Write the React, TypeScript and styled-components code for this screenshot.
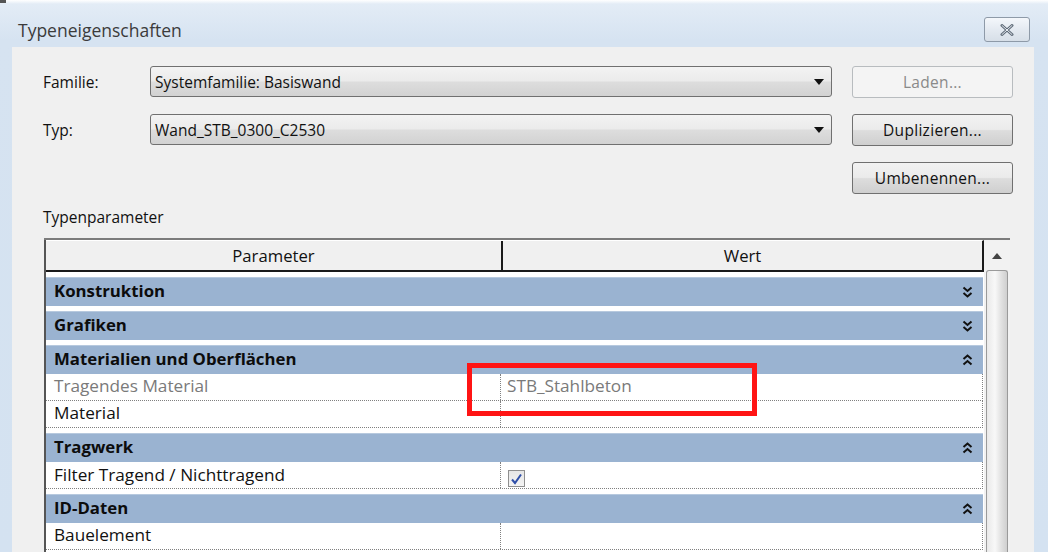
import React from "react";
import styled, { createGlobalStyle } from "styled-components";

const Global = createGlobalStyle`
  html, body { margin: 0; padding: 0; background: #ffffff; }
  body { font-family: "Open Sans", "Noto Sans", sans-serif; }
  * { box-sizing: border-box; }
`;

const Window = styled.div`
  width: 1048px;
  height: 552px;
  overflow: hidden;
  position: relative;
  background: linear-gradient(180deg, #ffffff 0px, #e3ecf6 4px, #d6e3f1 40px, #d4e2f1 100%);
  display: flex;
  flex-direction: column;
  &::before {
    content: "";
    position: absolute;
    left: 0;
    top: 0;
    width: 6px;
    height: 3px;
    background: #555;
  }
`;

const TitleBar = styled.div`
  height: 47px;
  flex: none;
  display: flex;
  align-items: flex-start;
  justify-content: space-between;
  padding: 0 18px 0 18px;
`;

const Title = styled.div`
  font-size: 17.5px;
  line-height: 22px;
  margin-top: 19px;
  color: #3b3b3b;
`;

const CloseButton = styled.div`
  width: 46px;
  height: 25px;
  margin-top: 17px;
  border: 1px solid #8e9aa8;
  border-radius: 3px;
  background: linear-gradient(180deg, #f4f7fb 0%, #e4eaf1 50%, #d7dfe8 100%);
  display: flex;
  align-items: center;
  justify-content: center;
`;

const Body = styled.div`
  flex: 1;
  display: flex;
  margin-left: 12px;
  margin-right: 14px;
  min-height: 0;
`;

const Client = styled.div`
  flex: 1;
  background: #f0f0f0;
  padding: 19px 0 0 31px;
  display: flex;
  flex-direction: column;
  min-height: 0;
`;

const FormGrid = styled.div`
  display: grid;
  grid-template-columns: 87px 682px 161px;
  grid-auto-rows: 32px;
  column-gap: 20px;
  row-gap: 16px;
`;

const Label = styled.div`
  font-size: 15.5px;
  color: #111;
  display: flex;
  align-items: center;
`;

const Select = styled.div`
  border: 1px solid #707070;
  border-radius: 3px;
  background: linear-gradient(180deg, #f3f3f3 0%, #ebebeb 48%, #dddddd 52%, #d2d2d2 100%);
  display: flex;
  align-items: center;
  justify-content: space-between;
  padding: 0 4px 0 4px;
  font-size: 15.5px;
  color: #111;
  height: 31px;
`;

const Arrow = styled.span`
  width: 0;
  height: 0;
  border-left: 5px solid transparent;
  border-right: 5px solid transparent;
  border-top: 6px solid #111;
  margin-right: 3px;
`;

const Button = styled.div<{ $disabled?: boolean }>`
  border: 1px solid ${(p) => (p.$disabled ? "#b8bcbf" : "#707070")};
  border-radius: 3px;
  background: ${(p) =>
    p.$disabled
      ? "#f4f4f4"
      : "linear-gradient(180deg, #f2f2f2 0%, #ebebeb 48%, #dddddd 52%, #cfcfcf 100%)"};
  color: ${(p) => (p.$disabled ? "#8a8a8a" : "#111")};
  font-size: 15.5px;
  letter-spacing: 0.3px;
  display: flex;
  align-items: center;
  justify-content: center;
`;

const SectionLabel = styled.div`
  font-size: 15.5px;
  color: #111;
  margin-top: 13px;
  height: 20px;
  line-height: 20px;
`;

const TableFrame = styled.div`
  margin-top: 11px;
  margin-left: 1px;
  width: 966px;
  flex: 1;
  display: flex;
  min-height: 0;
  border-top: 2px solid #7c7c7c;
`;

const TableMain = styled.div`
  width: 940px;
  display: flex;
  flex-direction: column;
  border-left: 2px solid #555;
  position: relative;
  background: #ffffff;
`;

const HeaderRow = styled.div`
  height: 32px;
  flex: none;
  display: grid;
  grid-template-columns: 457px 1fr;
  border-bottom: 2px solid #1a1a1a;
  border-right: 2px solid #1a1a1a;
  border-top: 1px solid #ffffff;
  background: #f0f0f0;
`;

const HeaderCell = styled.div<{ $divider?: boolean }>`
  display: flex;
  align-items: center;
  justify-content: center;
  font-size: 16.7px;
  color: #111;
  padding-bottom: 1px;
  border-right: ${(p) => (p.$divider ? "2px solid #1a1a1a" : "none")};
`;

const GroupRow = styled.div`
  flex: none;
  height: 34px;
  padding-top: 5px;
  background: #ffffff;
  margin-right: 1px;
`;

const GroupBar = styled.div`
  height: 29px;
  background: #9ab3d1;
  border-top: 1px solid #b7c9de;
  display: flex;
  align-items: center;
  justify-content: space-between;
  padding: 0 10px 3px 8px;
  font-size: 16.8px;
  font-weight: 700;
  color: #0c0c0c;
`;

const ChevronBox = styled.span`
  display: flex;
  margin-top: 2px;
`;

const DataRow = styled.div`
  flex: none;
  height: 27px;
  display: grid;
  grid-template-columns: 455px 1fr;
  border-bottom: 1px dotted #808080;
  border-right: 1px dotted #808080;
  margin-right: 1px;
  background: #ffffff;
`;

const DataCell = styled.div<{ $muted?: boolean; $divider?: boolean }>`
  display: flex;
  align-items: center;
  padding-left: ${(p) => (p.$divider ? "8px" : "6px")};
  padding-bottom: 3px;
  font-size: 17.2px;
  color: ${(p) => (p.$muted ? "#7a7a7a" : "#111")};
  border-right: ${(p) => (p.$divider ? "1px dotted #808080" : "none")};
`;

const Checkbox = styled.div`
  width: 17px;
  height: 17px;
  border: 1px solid #8f8f8f;
  background: linear-gradient(180deg, #e6e6e6, #f4f4f4);
  display: flex;
  align-items: center;
  justify-content: center;
  margin-top: 8px;
  margin-left: 1px;
`;

const Highlight = styled.div`
  position: absolute;
  left: 421px;
  top: 123px;
  width: 290px;
  height: 53px;
  border: 5px solid #ff1414;
  pointer-events: none;
`;

const Scrollbar = styled.div`
  width: 26px;
  display: flex;
  flex-direction: column;
  align-items: center;
  background: #f2f2f2;
  padding: 1px 2px 0 2px;
`;

const ScrollArrow = styled.div`
  height: 29px;
  width: 100%;
  display: flex;
  align-items: center;
  justify-content: center;
`;

const ScrollThumb = styled.div`
  flex: 1;
  width: 22px;
  border: 1px solid #9a9a9a;
  border-bottom: none;
  border-radius: 3px 3px 0 0;
  background: linear-gradient(90deg, #e9e9e9 0%, #f8f8f8 40%, #e2e2e2 70%, #cfcfcf 100%);
`;

const Chevron = ({ up }: { up?: boolean }) => (
  <svg width="11" height="12" viewBox="0 0 11 12">
    <g
      fill="none"
      stroke="#111"
      strokeWidth="2"
      transform={up ? "" : "rotate(180 5.5 6)"}
    >
      <path d="M1.5 5 L5.5 1.5 L9.5 5" />
      <path d="M1.5 10.5 L5.5 7 L9.5 10.5" />
    </g>
  </svg>
);

type Row =
  | { kind: "group"; label: string; open: boolean }
  | { kind: "data"; label: string; value?: string; muted?: boolean; check?: boolean };

const rows: Row[] = [
  { kind: "group", label: "Konstruktion", open: false },
  { kind: "group", label: "Grafiken", open: false },
  { kind: "group", label: "Materialien und Oberflächen", open: true },
  { kind: "data", label: "Tragendes Material", value: "STB_Stahlbeton", muted: true },
  { kind: "data", label: "Material", value: "" },
  { kind: "group", label: "Tragwerk", open: true },
  { kind: "data", label: "Filter Tragend / Nichttragend", check: true },
  { kind: "group", label: "ID-Daten", open: true },
  { kind: "data", label: "Bauelement", value: "" },
];

export default function App() {
  return (
    <>
      <Global />
      <Window>
        <TitleBar>
          <Title>Typeneigenschaften</Title>
          <CloseButton>
            <svg width="16" height="12" viewBox="0 0 16 12">
              <path
                d="M3 1.5 L13 10.5 M13 1.5 L3 10.5"
                stroke="#5f6b78"
                strokeWidth="3"
                strokeLinecap="round"
              />
              <path
                d="M3 1.5 L13 10.5 M13 1.5 L3 10.5"
                stroke="#e9eef4"
                strokeWidth="1"
                strokeLinecap="round"
              />
            </svg>
          </CloseButton>
        </TitleBar>
        <Body>
          <Client>
            <FormGrid>
              <Label>Familie:</Label>
              <Select>
                <span>Systemfamilie: Basiswand</span>
                <Arrow />
              </Select>
              <Button $disabled>Laden...</Button>
              <Label>Typ:</Label>
              <Select>
                <span>Wand_STB_0300_C2530</span>
                <Arrow />
              </Select>
              <Button>Duplizieren...</Button>
              <span />
              <span />
              <Button>Umbenennen...</Button>
            </FormGrid>
            <SectionLabel>Typenparameter</SectionLabel>
            <TableFrame>
              <TableMain>
                <HeaderRow>
                  <HeaderCell $divider>Parameter</HeaderCell>
                  <HeaderCell>Wert</HeaderCell>
                </HeaderRow>
                {rows.map((r, i) =>
                  r.kind === "group" ? (
                    <GroupRow key={i}>
                      <GroupBar>
                        <span>{r.label}</span>
                        <ChevronBox>
                          <Chevron up={r.open} />
                        </ChevronBox>
                      </GroupBar>
                    </GroupRow>
                  ) : (
                    <DataRow key={i}>
                      <DataCell $divider $muted={r.muted}>
                        {r.label}
                      </DataCell>
                      <DataCell $muted={r.muted}>
                        {r.check ? (
                          <Checkbox>
                            <svg width="13" height="12" viewBox="0 0 13 12">
                              <path
                                d="M2 6.5 L5 10 L11 1.5"
                                fill="none"
                                stroke="#2f4fa8"
                                strokeWidth="2"
                              />
                            </svg>
                          </Checkbox>
                        ) : (
                          r.value
                        )}
                      </DataCell>
                    </DataRow>
                  )
                )}
                <Highlight />
              </TableMain>
              <Scrollbar>
                <ScrollArrow>
                  <svg width="10" height="6" viewBox="0 0 10 6">
                    <path d="M0 6 L5 0 L10 6 Z" fill="#444" />
                  </svg>
                </ScrollArrow>
                <ScrollThumb />
              </Scrollbar>
            </TableFrame>
          </Client>
        </Body>
      </Window>
    </>
  );
}
